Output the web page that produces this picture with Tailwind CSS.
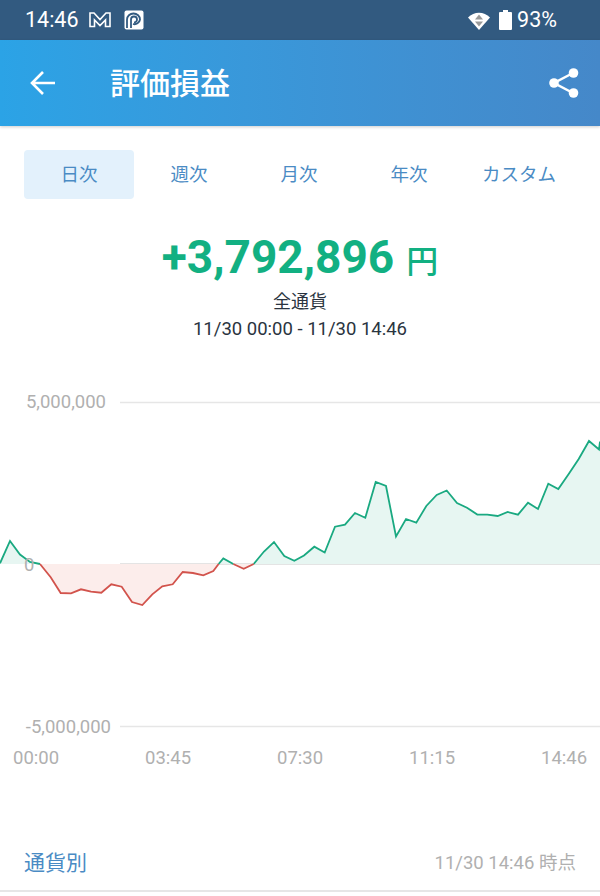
<!DOCTYPE html>
<html lang="ja">
<head>
  <meta charset="UTF-8" />
  <title>評価損益</title>
  <script src="https://cdn.jsdelivr.net/npm/@tailwindcss/browser@4"></script>
</head>
<body class="bg-white font-['Roboto','Noto_Sans_CJK_JP',sans-serif] w-[600px] h-[896px] overflow-hidden">
  <!-- status bar -->
  <div class="h-10 bg-[#325a80] flex items-center justify-between pl-[25px] pr-[43px] text-white text-[21.500px]">
    <div class="flex items-center">
      <span>14:46</span>
      <svg class="ml-[10px]" width="22" height="18" viewBox="0 0 22 18" fill="none" stroke="white" stroke-width="1.600"><path d="M1 2h4l6 6.500L17 2h4v13.500h-4.500V9l-5.500 5.500L5.500 9v6.500H1z"/></svg>
      <svg class="ml-[13px]" width="20" height="20" viewBox="0 0 20 20"><rect x="0.500" y="0.500" width="19" height="19" rx="2" fill="white"/><path d="M3 18V9.500A6.500 6 0 0 1 16 9.500 5.500 5.500 0 0 1 9 14" fill="none" stroke="#325a80" stroke-width="1.800"/><path d="M7 18V9.500A3 3 0 1 1 10 12.500" fill="none" stroke="#325a80" stroke-width="1.800"/></svg>
    </div>
    <div class="flex items-center">
      <svg width="24" height="19" viewBox="0 0 24 19"><path d="M1 6.500C7 0 17 0 23 6.500L12 19z" fill="white"/><path d="M12 3.500l4 5h-8z" fill="#9a9a9a"/><path d="M8 10.500h8L12 15.500z" fill="#9a9a9a"/></svg>
      <svg class="ml-[8px]" width="13" height="20" viewBox="0 0 13 20"><path d="M4 0h5v2h3a1 1 0 0 1 1 1v16a1 1 0 0 1-1 1H1a1 1 0 0 1-1-1V3a1 1 0 0 1 1-1h3z" fill="white"/></svg>
      <span class="ml-[5px]">93%</span>
    </div>
  </div>

  <!-- app bar -->
  <header class="h-[86px] bg-gradient-to-r from-[#2ba3e6] to-[#4588c9] flex items-center justify-between shadow-[0_1px_3px_rgba(0,0,0,0.2)] relative pl-[30px] pr-[21px] text-white">
    <div class="flex items-center">
      <svg width="26" height="26" viewBox="0 0 26 26" fill="none" stroke="white" stroke-width="2.600"><path d="M25 13H2M13 2 2 13l11 11"/></svg>
      <h1 class="ml-[54px] text-[30px] font-medium">評価損益</h1>
    </div>
    <svg width="30" height="32" viewBox="0 0 30 32" fill="white"><path d="M24 6 5 16l19 10" fill="none" stroke="white" stroke-width="2.500"/><circle cx="24.500" cy="6" r="4.800"/><circle cx="5" cy="16" r="4.800"/><circle cx="24.500" cy="26" r="4.800"/></svg>
  </header>

  <!-- period tabs -->
  <nav class="flex mt-6 px-6 text-[18.500px] text-[#4a8bc4]">
    <div class="w-[110px] h-[49px] pt-[2px] flex items-center justify-center rounded bg-[#e3f1fc]">日次</div>
    <div class="w-[110px] h-[49px] pt-[2px] flex items-center justify-center">週次</div>
    <div class="w-[110px] h-[49px] pt-[2px] flex items-center justify-center">月次</div>
    <div class="w-[110px] h-[49px] pt-[2px] flex items-center justify-center">年次</div>
    <div class="w-[110px] h-[49px] pt-[2px] flex items-center justify-center">カスタム</div>
  </nav>

  <!-- total -->
  <section class="flex flex-col items-center mt-[29px] text-[#2a3440]">
    <div class="flex items-baseline text-[#12b082] leading-[58px]">
      <span class="text-[46px] font-bold">+3,792,896</span>
      <span class="text-[32px] ml-[12px] font-medium">円</span>
    </div>
    <div class="text-[18px] leading-6 -mt-[1px]">全通貨</div>
    <div class="text-[18.500px] leading-6 mt-[3px]">11/30 00:00 - 11/30 14:46</div>
  </section>

  <!-- chart -->
  <div class="relative h-[450px] mt-[30px]">
    <svg class="absolute top-0 left-0" width="600" height="450" viewBox="0 370 600 450">
      <path d="M120 401.500H600M120 725.500H600" stroke="#e6e6e6" stroke-width="1.500"/>
      <path d="M120 563H600" stroke="#e4e4e4" stroke-width="2"/>
      <path d="M0 563 0 562.300 10 540 20 553.500 30 561 40 563ZM218.600 563 223.300 557.500 233.300 563ZM253.700 563 264 550.500 274 541 284.300 555 294.300 559.700 304 554.500 314.300 545.700 324.700 551.500 335 525.700 345 523.700 355 512 365.300 516.700 375.700 481 386 485 396 535.500 406 518 416.300 521.700 426.300 505 436.700 494 446.700 489.500 457 502 467 506.700 477.300 513.500 487.300 513.700 497.700 515 507.700 511 518 513.700 528 501.700 538 508 548.300 482.700 558.300 488 568.700 473 578.700 458 589 440 599 448.500 600 440.500V563Z" fill="#e7f6f2"/>
      <path d="M40 563 50.700 576.300 60.700 592 71 592.300 81 588.300 91 590.700 101.300 591.700 111.300 583.300 121.700 585.700 132 601 142.300 604 152.300 593.300 162.300 585.300 172.700 583.300 182.700 571 193 572 203.300 574.300 213.300 570 218.600 563ZM233.300 563 243.700 567.700 253.700 563Z" fill="#fcedeb"/>
      <path d="M0 562.300 10 540 20 553.500 30 561 40 563M218.600 563 223.300 557.500 233.300 563M253.700 563 264 550.500 274 541 284.300 555 294.300 559.700 304 554.500 314.300 545.700 324.700 551.500 335 525.700 345 523.700 355 512 365.300 516.700 375.700 481 386 485 396 535.500 406 518 416.300 521.700 426.300 505 436.700 494 446.700 489.500 457 502 467 506.700 477.300 513.500 487.300 513.700 497.700 515 507.700 511 518 513.700 528 501.700 538 508 548.300 482.700 558.300 488 568.700 473 578.700 458 589 440 599 448.500 600 440.500" fill="none" stroke="#1aa981" stroke-width="1.800"/>
      <path d="M40 563 50.700 576.300 60.700 592 71 592.300 81 588.300 91 590.700 101.300 591.700 111.300 583.300 121.700 585.700 132 601 142.300 604 152.300 593.300 162.300 585.300 172.700 583.300 182.700 571 193 572 203.300 574.300 213.300 570 218.600 563M233.300 563 243.700 567.700 253.700 563" fill="none" stroke="#d2534c" stroke-width="1.800"/>
    </svg>
    <div class="absolute left-0 top-[19px] w-[106px] text-right text-[18.500px] leading-6 text-[#b0b0b0]">5,000,000</div>
    <div class="absolute left-[24px] top-[182px] text-[18.500px] leading-6 text-[#b0b0b0]">0</div>
    <div class="absolute left-0 top-[344px] w-[111px] text-right text-[18.500px] leading-6 text-[#b0b0b0]">-5,000,000</div>
    <div class="absolute left-[13px] top-[375px] text-[18.500px] leading-6 text-[#b0b0b0]">00:00</div>
    <div class="absolute left-[145px] top-[375px] text-[18.500px] leading-6 text-[#b0b0b0]">03:45</div>
    <div class="absolute left-[277px] top-[375px] text-[18.500px] leading-6 text-[#b0b0b0]">07:30</div>
    <div class="absolute left-[409px] top-[375px] text-[18.500px] leading-6 text-[#b0b0b0]">11:15</div>
    <div class="absolute left-[541px] top-[375px] text-[18.500px] leading-6 text-[#b0b0b0]">14:46</div>
  </div>

  <!-- by currency header -->
  <div class="flex items-center justify-between px-6 h-[71px] pt-4 border-b-2 border-[#e6e6e6]">
    <span class="text-[21px] text-[#4a8bc4]">通貨別</span>
    <span class="text-[18.500px] text-[#b0b0b0]">11/30 14:46 時点</span>
  </div>
</body>
</html>
